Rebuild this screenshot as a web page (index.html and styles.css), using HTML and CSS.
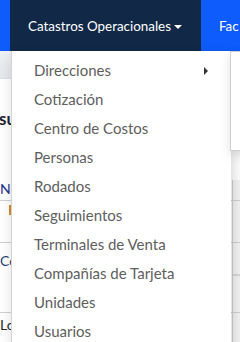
FILE: index.html
```html
<!DOCTYPE html>
<html lang="es">
<head>
  <meta charset="UTF-8" />
  <title>Catastros</title>
  <link rel="stylesheet" href="styles.css">
</head>
<body>

  <nav class="navbar">
    <div class="nav-edge"></div>
    <div class="nav-item active">Catastros Operacionales<span class="caret"></span></div>
    <div class="nav-item">Fac</div>
  </nav>

  <!-- Contenido de fondo -->
  <div class="page">
    <div class="toolbar"></div>
    <h3 class="title">su</h3>
    <table class="grid">
      <tr class="row-head"><td class="c-main">No</td><td class="c-side"></td></tr>
      <tr class="row-a"><td class="c-main"><span class="tag"></span></td><td class="c-side"></td></tr>
      <tr class="row-b"><td class="c-main">Co</td><td class="c-side split"></td></tr>
      <tr class="row-c"><td class="c-main">Lo</td><td class="c-side"></td></tr>
    </table>
  </div>

  <!-- Menu desplegable -->
  <ul class="dropdown">
    <li class="has-sub">Direcciones<span class="arrow"></span></li>
    <li>Cotización</li>
    <li>Centro de Costos</li>
    <li>Personas</li>
    <li>Rodados</li>
    <li>Seguimientos</li>
    <li>Terminales de Venta</li>
    <li>Compañías de Tarjeta</li>
    <li>Unidades</li>
    <li>Usuarios</li>
  </ul>
  <div class="submenu"></div>

</body>
</html>
```

FILE: styles.css
```css
body {
  margin: 0;
  font-family: 'Lato', 'Open Sans', sans-serif;
  background: white;
  overflow: hidden;
}
.navbar {
  display: flex;
  height: 51px;
  background-color: #0d5cfb;
}
.nav-edge {
  width: 10px;
  flex-shrink: 0;
}
.nav-item {
  display: flex;
  align-items: center;
  flex-shrink: 0;
  padding: 0 18px;
  color: white;
  font-size: 13.4px;
  white-space: nowrap;
}
.nav-item.active {
  background-color: #112947;
  width: 155px;
}
.caret {
  display: inline-block;
  margin-left: 3px;
  margin-top: 2px;
  border-left: 4px solid transparent;
  border-right: 4px solid transparent;
  border-top: 4px solid white;
}
.toolbar {
  height: 27px;
  background: linear-gradient(#eef0f3, #e4e7eb);
  border-bottom: 1px solid #dde0e4;
}
.title {
  margin: 29px 0 0 -1px;
  font-size: 17px;
  font-weight: 700;
  color: #1d2330;
  height: 20px;
}
.grid {
  border-collapse: collapse;
  margin-top: 52px;
  width: 100%;
}
.grid td {
  padding: 0;
  font-size: 14px;
}
.c-main {
  width: 232px;
  color: #18306a;
}
.c-side {
  background: #f3f3f3;
  border-left: 1px solid #d0d0d0;
}
.row-head td {
  height: 20px;
  border-bottom: 1px solid #cfcfcf;
  vertical-align: top;
}
.row-head .c-main {
  color: #1f2f8a;
}
.row-a td {
  height: 41px;
  border-bottom: 1px solid #cfcfcf;
  vertical-align: top;
}
.tag {
  display: inline-block;
  margin-top: 3px;
  margin-left: 9px;
  width: 3px;
  height: 10px;
  background: #d88a2a;
}
.row-b td {
  height: 60px;
  border-bottom: 1px solid #cfcfcf;
  vertical-align: top;
}
.row-b .c-main {
  padding-top: 9px;
  color: #2a3f7a;
}
.split {
  background: linear-gradient(#f3f3f3 31px, #bdbdbd 31px, #bdbdbd 32px, #f3f3f3 32px);
}
.row-c td {
  height: 30px;
  vertical-align: top;
}
.row-c .c-main {
  padding-top: 3px;
  color: #2a2a2a;
}

/* Menu desplegable */
.dropdown {
  position: absolute;
  top: 51px;
  left: 11px;
  width: 219px;
  height: 300px;
  margin: 0;
  padding: 5px 0 0 0;
  list-style: none;
  background: white;
  border-left: 1px solid #d4d4d4;
  box-shadow: 2px 4px 12px rgba(0, 0, 0, 0.18);
}
.dropdown li {
  position: relative;
  height: 29px;
  line-height: 29px;
  padding-left: 22px;
  font-size: 15px;
  color: #5e5e5e;
}
.arrow {
  position: absolute;
  left: 192px;
  top: 11px;
  border-top: 4px solid transparent;
  border-bottom: 4px solid transparent;
  border-left: 4px solid #333;
}
.submenu {
  position: absolute;
  top: 51px;
  left: 230px;
  width: 40px;
  height: 98px;
  background: white;
  border: 1px solid #cfcfcf;
  box-shadow: 0 4px 10px rgba(0, 0, 0, 0.12);
}
```
